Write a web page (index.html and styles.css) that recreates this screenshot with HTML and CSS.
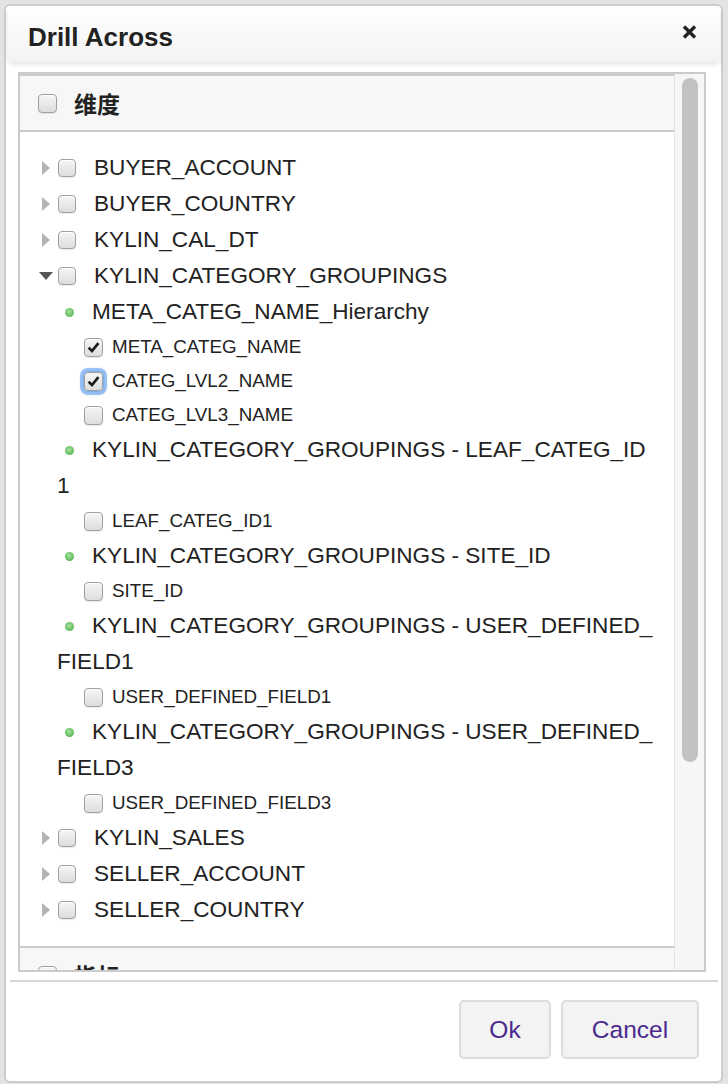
FILE: index.html
```html
<!DOCTYPE html>
<html lang="en">
<head>
<meta charset="utf-8">
<title>Drill Across</title>
<link rel="stylesheet" href="styles.css">
</head>
<body>
<div class="modal">
  <div class="modal-header">
    <h4 class="modal-title">Drill Across</h4>
    <span class="close" aria-label="close">
      <svg width="15" height="14" viewBox="0 0 15 14"><path d="M2 1.5 L13 12.5 M13 1.5 L2 12.5" stroke="#222" stroke-width="3.4" fill="none"/></svg>
    </span>
  </div>

  <div class="scrollbox">
    <div class="panels">
      <div class="panel-heading">
        <span class="cb big"></span>
        <span class="ph-text">维度</span>
      </div>
      <ul class="tree">
        <li><div class="row"><span class="toggle"><i class="tri-right"></i></span><span class="cb"></span><span class="label">BUYER_ACCOUNT</span></div></li>
        <li><div class="row"><span class="toggle"><i class="tri-right"></i></span><span class="cb"></span><span class="label">BUYER_COUNTRY</span></div></li>
        <li><div class="row"><span class="toggle"><i class="tri-right"></i></span><span class="cb"></span><span class="label">KYLIN_CAL_DT</span></div></li>
        <li>
          <div class="row"><span class="toggle"><i class="tri-down"></i></span><span class="cb"></span><span class="label">KYLIN_CATEGORY_GROUPINGS</span></div>
          <ul class="hier-list">
            <li>
              <div class="hier-label"><span class="dot"></span>META_CATEG_NAME_Hierarchy</div>
              <ul class="leaves">
                <li class="leaf"><span class="cb big checked"><svg width="17" height="17" viewBox="0 0 17 17"><path d="M3.6 8.6 L7 12 L13.4 4.2" stroke="#1c1c1c" stroke-width="2.7" fill="none"/></svg></span><span>META_CATEG_NAME</span></li>
                <li class="leaf"><span class="cb big checked focus"><svg width="17" height="17" viewBox="0 0 17 17"><path d="M3.6 8.6 L7 12 L13.4 4.2" stroke="#1c1c1c" stroke-width="2.7" fill="none"/></svg></span><span>CATEG_LVL2_NAME</span></li>
                <li class="leaf"><span class="cb big"></span><span>CATEG_LVL3_NAME</span></li>
              </ul>
            </li>
            <li>
              <div class="hier-label"><span class="dot"></span>KYLIN_CATEGORY_GROUPINGS - LEAF_CATEG_ID1</div>
              <ul class="leaves">
                <li class="leaf"><span class="cb big"></span><span>LEAF_CATEG_ID1</span></li>
              </ul>
            </li>
            <li>
              <div class="hier-label"><span class="dot"></span>KYLIN_CATEGORY_GROUPINGS - SITE_ID</div>
              <ul class="leaves">
                <li class="leaf"><span class="cb big"></span><span>SITE_ID</span></li>
              </ul>
            </li>
            <li>
              <div class="hier-label"><span class="dot"></span>KYLIN_CATEGORY_GROUPINGS - USER_DEFINED_FIELD1</div>
              <ul class="leaves">
                <li class="leaf"><span class="cb big"></span><span>USER_DEFINED_FIELD1</span></li>
              </ul>
            </li>
            <li>
              <div class="hier-label"><span class="dot"></span>KYLIN_CATEGORY_GROUPINGS - USER_DEFINED_FIELD3</div>
              <ul class="leaves">
                <li class="leaf"><span class="cb big"></span><span>USER_DEFINED_FIELD3</span></li>
              </ul>
            </li>
          </ul>
        </li>
        <li><div class="row"><span class="toggle"><i class="tri-right"></i></span><span class="cb"></span><span class="label">KYLIN_SALES</span></div></li>
        <li><div class="row"><span class="toggle"><i class="tri-right"></i></span><span class="cb"></span><span class="label">SELLER_ACCOUNT</span></div></li>
        <li><div class="row"><span class="toggle"><i class="tri-right"></i></span><span class="cb"></span><span class="label">SELLER_COUNTRY</span></div></li>
      </ul>
      <div class="panel-heading">
        <span class="cb big"></span>
        <span class="ph-text">指标</span>
      </div>
    </div>
    <div class="track"><div class="thumb"></div></div>
  </div>

  <div class="footer-line"></div>
  <div class="modal-footer">
    <button class="btn btn-ok">Ok</button>
    <button class="btn btn-cancel">Cancel</button>
  </div>
</div>
</body>
</html>
```

FILE: styles.css
```css
html, body {
  margin: 0;
  padding: 0;
}
body {
  background: #e3e3e3;
  font-family: "Liberation Sans", Arial, "Noto Sans CJK SC", sans-serif;
  color: #222;
  padding: 4px 0 0 4px;
}

.modal {
  width: 719px;
  height: 1079px;
  box-sizing: border-box;
  border: 2px solid #cdcdcd;
  border-radius: 6px;
  background: #fff;
  display: flex;
  flex-direction: column;
}

.modal-header {
  margin: 3px 1px 0 2px;
  height: 53px;
  box-sizing: border-box;
  padding: 0 23px 0 20px;
  display: flex;
  align-items: center;
  justify-content: space-between;
  background: linear-gradient(#ffffff, #f3f3f3);
  border-radius: 4px;
  box-shadow: 0 2px 5px rgba(0, 0, 0, 0.12);
  flex: none;
}
.modal-title {
  margin: 0;
  padding-top: 2px;
  font-size: 26px;
  line-height: 1;
  font-weight: bold;
  color: #222;
}
.close {
  display: flex;
  margin-top: -8px;
}

.scrollbox {
  margin: 10px 15px 0 12px;
  height: 900px;
  box-sizing: border-box;
  border: 2px solid #cbcbcb;
  display: flex;
  flex: none;
}
.panels {
  flex: 1;
  min-width: 0;
  overflow: hidden;
  border-top: 2px solid #cbcbcb;
}
.track {
  width: 30px;
  flex: none;
  box-sizing: border-box;
  border-left: 1px solid #e2e2e2;
  background: #f6f6f6;
  padding: 4px 6px 0 7px;
}
.thumb {
  height: 684px;
  border-radius: 8px;
  background: #c2c2c2;
}

.panel-heading {
  height: 56px;
  box-sizing: border-box;
  display: flex;
  align-items: center;
  padding-left: 18px;
  background: #f7f7f7;
  border-bottom: 2px solid #cbcbcb;
}
.ph-text {
  margin-left: 17px;
  font-family: "Noto Sans CJK SC", sans-serif;
  font-size: 23px;
  font-weight: bold;
  color: #222;
}

.tree {
  list-style: none;
  margin: 0;
  padding: 18px 16px 18px 18px;
  border-bottom: 2px solid #cbcbcb;
}
.tree ul {
  list-style: none;
  margin: 0;
}

.row {
  display: flex;
  align-items: center;
  height: 36px;
  font-size: 22.6px;
  color: #222;
}
.toggle {
  width: 16px;
  height: 36px;
  display: flex;
  align-items: center;
  justify-content: center;
  flex: none;
}
.tri-right {
  width: 0;
  height: 0;
  border-left: 8px solid #b4b4b4;
  border-top: 7px solid transparent;
  border-bottom: 7px solid transparent;
}
.tri-down {
  width: 0;
  height: 0;
  border-top: 8px solid #555;
  border-left: 7px solid transparent;
  border-right: 7px solid transparent;
}
.row .cb {
  margin-left: 4px;
}
.label {
  margin-left: 18px;
  white-space: nowrap;
}

.hier-list {
  padding: 0 0 0 19px;
}
.hier-label {
  font-size: 22.6px;
  line-height: 36px;
  word-break: break-all;
  color: #222;
}
.dot {
  display: inline-block;
  width: 9px;
  height: 9px;
  border-radius: 50%;
  margin: 0 18px 0 8px;
  background: radial-gradient(circle at 45% 40%, #a6e3a0 0%, #6cc267 55%, #4fa54b 100%);
  vertical-align: 2px;
}

.leaves {
  padding: 0 0 0 27px;
}
.leaf {
  display: flex;
  align-items: center;
  height: 34px;
  font-size: 18.8px;
  color: #222;
}
.leaf .cb {
  margin-right: 9px;
}

.cb {
  width: 18px;
  height: 18px;
  box-sizing: border-box;
  flex: none;
  border: 1px solid #a0a0a0;
  border-radius: 4px;
  background: linear-gradient(#f6f6f6, #dddddd);
  box-shadow: inset 0 1px 0 #ffffff, 0 1px 1px rgba(0, 0, 0, 0.08);
  display: flex;
  align-items: center;
  justify-content: center;
}
.cb.big {
  width: 19px;
  height: 19px;
}
.cb svg {
  display: block;
}
.cb.focus {
  box-shadow: 0 0 0 1px #7fb0ee, 0 0 1px 4px rgba(110, 165, 240, 0.75);
}

.footer-line {
  margin: 8px 3px 0 4px;
  height: 2px;
  background: #d6d6d6;
  flex: none;
}
.modal-footer {
  display: flex;
  justify-content: flex-end;
  gap: 10px;
  padding: 18px 22px 0 0;
}
.btn {
  height: 59px;
  box-sizing: border-box;
  border: 2px solid #dcdcdc;
  border-radius: 5px;
  background: #f3f3f3;
  color: #4b2a8f;
  font-family: "Liberation Sans", Arial, sans-serif;
  font-size: 24.5px;
  padding: 0;
}
.btn-ok {
  width: 92px;
}
.btn-cancel {
  width: 138px;
}
```
